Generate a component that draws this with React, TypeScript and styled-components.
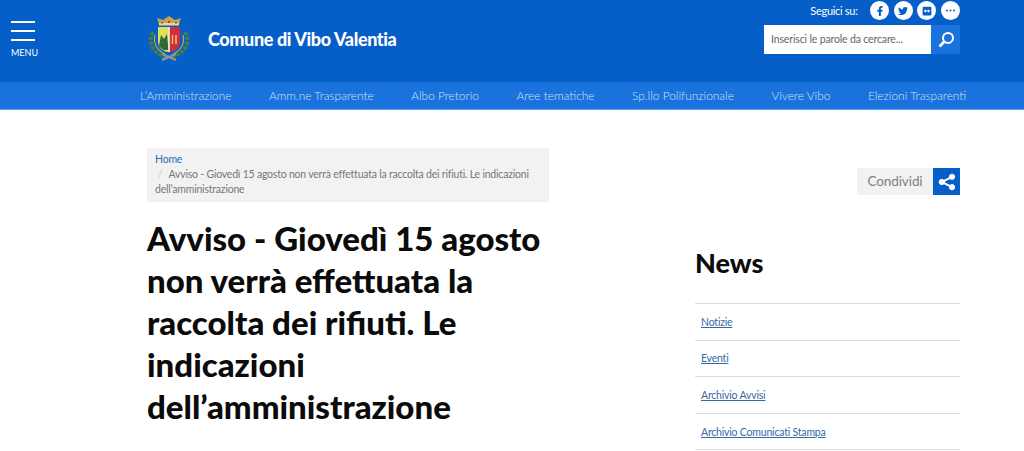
import React from "react";
import styled, { createGlobalStyle } from "styled-components";
import { FaFacebookF, FaTwitter, FaFlickr } from "react-icons/fa";

const GlobalStyle = createGlobalStyle`
  html, body {
    margin: 0;
    padding: 0;
    background: #fff;
    overflow: hidden;
    font-family: "Lato", "Open Sans", sans-serif;
  }
`;

const Page = styled.div`
  width: 1024px;
  height: 451px;
  overflow: hidden;
`;

// 헤더
const TopBar = styled.header`
  height: 82px;
  background: #065ec8;
  display: flex;
  padding-right: 64px;
`;

const MenuButton = styled.div`
  width: 147px;
  padding: 21px 0 0 11px;
  box-sizing: border-box;
  display: flex;
  flex-direction: column;
  color: #fff;
`;

const BurgerLine = styled.span`
  display: block;
  width: 24px;
  height: 2px;
  background: #fff;
  margin-bottom: 7px;
`;

const MenuLabel = styled.span`
  font-size: 9px;
  line-height: 11px;
  font-weight: 400;
  margin-top: -1px;
`;

const Brand = styled.div`
  display: flex;
  align-items: flex-start;
  flex: 1;
  padding-top: 15px;
  gap: 17px;
`;

const BrandName = styled.div`
  color: #fff;
  font-size: 18px;
  font-weight: 900;
  line-height: 24px;
  margin-top: 12px;
  letter-spacing: -0.38px;
`;

const TopRight = styled.div`
  width: 196px;
`;

const SocialRow = styled.div`
  height: 25px;
  padding-top: 1px;
  box-sizing: border-box;
  display: flex;
  align-items: flex-start;
  justify-content: flex-end;
  gap: 4.6px;
`;

const SocialLabel = styled.span`
  color: #fff;
  font-size: 11px;
  line-height: 19px;
  letter-spacing: -0.3px;
  margin-right: 8px;
`;

const SocialDot = styled.span`
  width: 19px;
  height: 19px;
  border-radius: 50%;
  background: #fff;
  color: #065ec8;
  font-size: 10px;
  display: flex;
  align-items: center;
  justify-content: center;
`;

const SearchBox = styled.div`
  display: flex;
  height: 29px;
`;

const SearchInput = styled.div`
  flex: 1;
  background: #fff;
  color: #666;
  font-size: 10.5px;
  letter-spacing: -0.15px;
  line-height: 29px;
  padding-left: 7px;
`;

const SearchButton = styled.div`
  width: 29px;
  background: #1a73dc;
  display: flex;
  align-items: center;
  justify-content: center;
`;

const NavBar = styled.nav`
  height: 27px;
  background: #1a73dc;
  border-bottom: 1px solid #5d9ce6;
  display: flex;
  align-items: center;
  gap: 37.5px;
  padding-left: 140px;
`;

const NavItem = styled.a`
  color: #d0e2f8;
  font-size: 11.9px;
  font-weight: 300;
  white-space: nowrap;
`;

// 본문
const Main = styled.main`
  display: grid;
  grid-template-columns: 402px 265px;
  column-gap: 146px;
  padding: 38px 0 0 147px;
`;

const Breadcrumb = styled.div`
  background: #f2f2f2;
  padding: 4px 8px;
  height: 54px;
  box-sizing: border-box;
  font-size: 10.5px;
  letter-spacing: -0.21px;
  line-height: 15px;
  color: #777;
`;

const Crumb = styled.a`
  color: #2a6db5;
  display: block;
`;

const CurrentCrumb = styled.span`
  &::before {
    content: "/";
    color: #ccc;
    margin: 0 6px 0 3px;
  }
`;

const Title = styled.h1`
  margin: 15px 0 0;
  color: #0b0b0b;
  font-size: 33px;
  line-height: 42px;
  font-weight: 900;
`;

const Aside = styled.aside`
  display: flex;
  flex-direction: column;
`;

const ShareRow = styled.div`
  display: flex;
  justify-content: flex-end;
  margin-top: 20px;
  height: 27px;
`;

const ShareLabel = styled.span`
  width: 76px;
  background: #f2f2f2;
  color: #808080;
  font-size: 13.5px;
  letter-spacing: -0.1px;
  line-height: 27px;
  text-align: center;
`;

const ShareIcon = styled.span`
  width: 27px;
  background: #065ec8;
  display: flex;
  align-items: center;
  justify-content: center;
`;

const AsideTitle = styled.h2`
  margin: 51px 0 23px;
  color: #0b0b0b;
  font-size: 27px;
  line-height: 34px;
  font-weight: 900;
`;

const LinkList = styled.ul`
  list-style: none;
  margin: 0;
  padding: 0;
  border-top: 1px solid #ddd;
`;

const LinkRow = styled.li`
  height: 35.6px;
  border-bottom: 1px solid #ddd;
  display: flex;
  align-items: center;
  padding-left: 6px;
`;

const SideLink = styled.a`
  color: #3767a4;
  font-size: 10.5px;
  letter-spacing: -0.2px;
  text-decoration: underline;
`;

const Emblem = () => (
  <svg width="44" height="46" viewBox="0 0 44 46">
    <path d="M12 9 L10 3 L16 5 L22 1 L28 5 L34 3 L32 9 Z" fill="#c9a548" />
    <rect x="12" y="8" width="20" height="2.5" fill="#e6d9a0" />
    <path d="M14 7 h2 v1.5 h-2z M21 6 h2 v2 h-2z M28 7 h2 v1.5 h-2z" fill="#a5443a" />
    <path d="M6 17 C0 28 6 38 19 42" fill="none" stroke="#4a7f3a" strokeWidth="4" strokeDasharray="3.5 1.5" />
    <path d="M38 17 C44 28 38 38 25 42" fill="none" stroke="#4a7f3a" strokeWidth="4" strokeDasharray="3.5 1.5" />
    <path d="M8 20 C6 29 10 35 18 39" fill="none" stroke="#b7a94e" strokeWidth="1.2" />
    <path d="M36 20 C38 29 34 35 26 39" fill="none" stroke="#b7a94e" strokeWidth="1.2" />
    <path d="M11 12 H22 V37 C16 37 11 33 11 26 Z" fill="#dfe05a" />
    <path d="M12 31 L14 20 L17 24 L20 19 L21.5 35 L16 35 Z" fill="#2d6a3a" />
    <path d="M22 12 H33 V26 C33 33 28 37 22 37 Z" fill="#cf2f36" />
    <rect x="21.3" y="12" width="1.5" height="25" fill="#f4f0e0" />
    <path d="M25.5 20 V29 M29 20 V29" stroke="#e8c878" strokeWidth="1.4" />
    <path d="M15 39 L29 45 M29 39 L15 45" stroke="#8f9a98" strokeWidth="2" />
  </svg>
);

const navItems = [
  "L’Amministrazione",
  "Amm.ne Trasparente",
  "Albo Pretorio",
  "Aree tematiche",
  "Sp.llo Polifunzionale",
  "Vivere Vibo",
  "Elezioni Trasparenti",
];

const sideLinks = ["Notizie", "Eventi", "Archivio Avvisi", "Archivio Comunicati Stampa"];

const App = () => {
  return (
    <>
      <GlobalStyle />
      <Page>
        <TopBar>
          <MenuButton>
            <BurgerLine />
            <BurgerLine />
            <BurgerLine />
            <MenuLabel>MENU</MenuLabel>
          </MenuButton>
          <Brand>
            <Emblem />
            <BrandName>Comune di Vibo Valentia</BrandName>
          </Brand>
          <TopRight>
            <SocialRow>
              <SocialLabel>Seguici su:</SocialLabel>
              <SocialDot><FaFacebookF /></SocialDot>
              <SocialDot><FaTwitter /></SocialDot>
              <SocialDot><FaFlickr /></SocialDot>
              <SocialDot>
                <svg width="11" height="3" viewBox="0 0 11 3" fill="#065ec8">
                  <circle cx="2" cy="1.5" r="1" />
                  <circle cx="5.5" cy="1.5" r="1" />
                  <circle cx="9" cy="1.5" r="1" />
                </svg>
              </SocialDot>
            </SocialRow>
            <SearchBox>
              <SearchInput>Inserisci le parole da cercare...</SearchInput>
              <SearchButton>
                <svg width="18" height="18" viewBox="0 0 18 18" fill="none" stroke="#fff">
                  <circle cx="11" cy="7" r="5" strokeWidth="2" />
                  <path d="M7.5 10.5 L2.5 15.5" strokeWidth="2.6" />
                </svg>
              </SearchButton>
            </SearchBox>
          </TopRight>
        </TopBar>
        <NavBar>
          {navItems.map((item) => (
            <NavItem key={item}>{item}</NavItem>
          ))}
        </NavBar>
        <Main>
          <div>
            <Breadcrumb>
              <Crumb>Home</Crumb>
              <CurrentCrumb>Avviso - Giovedì 15 agosto non verrà effettuata la raccolta dei rifiuti. Le indicazioni dell’amministrazione</CurrentCrumb>
            </Breadcrumb>
            <Title>Avviso - Giovedì 15 agosto non verrà effettuata la raccolta dei rifiuti. Le indicazioni dell’amministrazione</Title>
          </div>
          <Aside>
            <ShareRow>
              <ShareLabel>Condividi</ShareLabel>
              <ShareIcon>
                <svg width="18" height="18" viewBox="0 0 18 18" fill="#fff" stroke="#fff">
                  <circle cx="14" cy="3.8" r="2.6" />
                  <circle cx="14" cy="14.2" r="2.6" />
                  <circle cx="3.8" cy="9" r="2.6" />
                  <path d="M14 3.8 L3.8 9 L14 14.2" fill="none" strokeWidth="2" />
                </svg>
              </ShareIcon>
            </ShareRow>
            <AsideTitle>News</AsideTitle>
            <LinkList>
              {sideLinks.map((link) => (
                <LinkRow key={link}>
                  <SideLink>{link}</SideLink>
                </LinkRow>
              ))}
            </LinkList>
          </Aside>
        </Main>
      </Page>
    </>
  );
};

export default App;
